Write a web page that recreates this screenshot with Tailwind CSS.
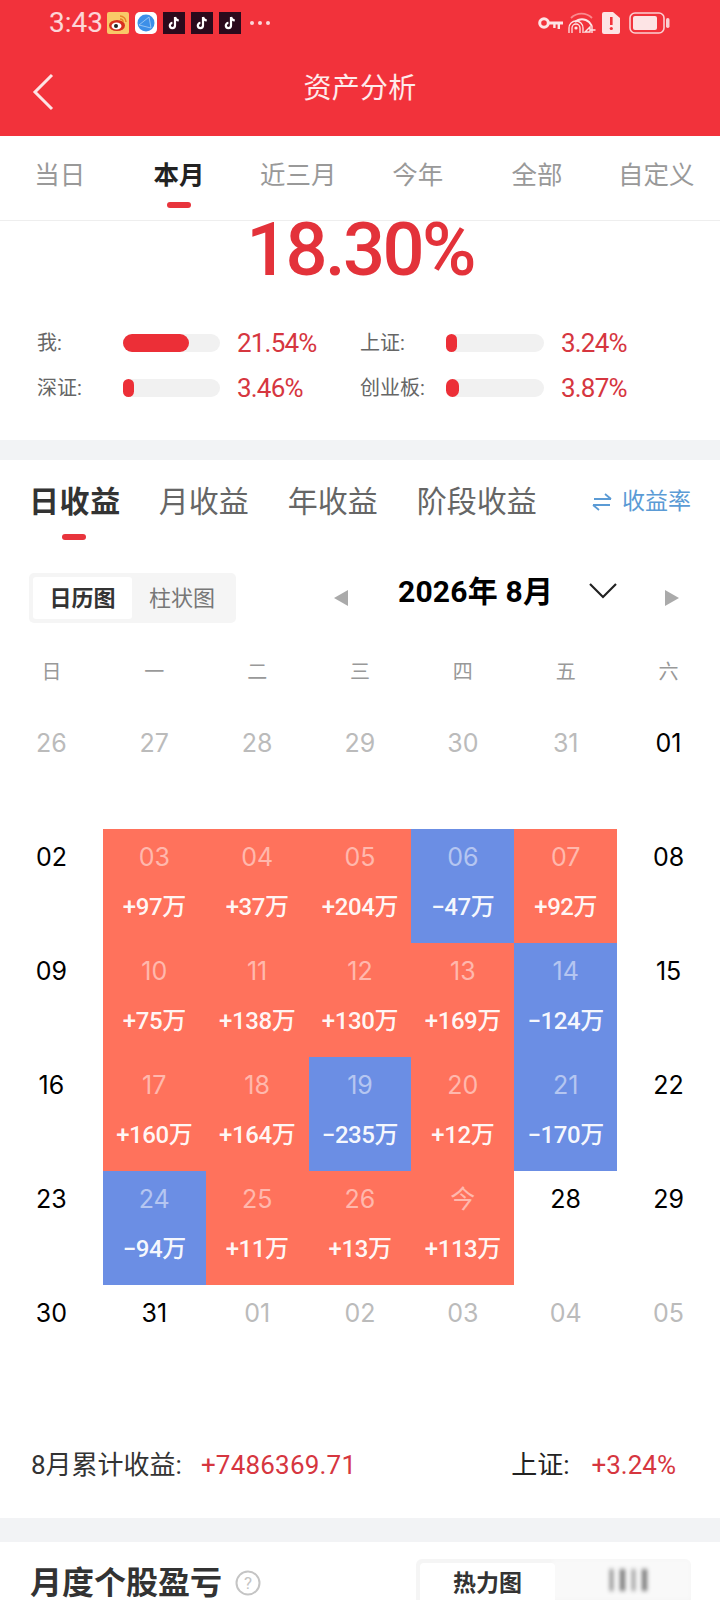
<!DOCTYPE html>
<html lang="zh">
<head>
  <meta charset="UTF-8" />
  <meta name="viewport" content="width=device-width, initial-scale=1.0"/>
  <title>资产分析</title>
  <script src="https://cdn.jsdelivr.net/npm/@tailwindcss/browser@4"></script>
</head>
<body class="bg-white font-['Roboto','Noto_Sans_CJK_SC',sans-serif]">
<div class="w-[720px] h-[1600px] overflow-hidden flex flex-col">

  <!-- header -->
  <div class="bg-[#f2323b] h-[136px] shrink-0 flex flex-col text-white">
    <div class="h-[46px] flex items-center pl-[49px] pr-[50px]">
      <span class="text-[28px] w-[58px] text-white/80 leading-none">3:43</span>
      <svg class="w-[22px] h-[22px] mr-[6px]" viewBox="0 0 22 22"><rect width="22" height="22" rx="2" fill="#f9c968"/><ellipse cx="10" cy="13.5" rx="8" ry="5.5" fill="#d8301f"/><ellipse cx="9.5" cy="14" rx="5" ry="3.5" fill="#fff"/><circle cx="9" cy="14" r="2" fill="#222"/><path d="M13 4a6 6 0 0 1 6 6M13 7a3 3 0 0 1 3 3" stroke="#e9842a" stroke-width="1.5" fill="none"/></svg>
      <svg class="w-[22px] h-[22px] mr-[6px]" viewBox="0 0 22 22"><rect width="22" height="22" rx="5" fill="#fff"/><circle cx="11" cy="11" r="8.5" fill="#3d8fe8"/><path d="M4 13l10-8M14 5l2 11M4 13l12 3" stroke="#a9d0f7" stroke-width="0.8" fill="none"/></svg>
      <svg class="w-[22px] h-[22px] mr-[6px]" viewBox="0 0 22 22"><rect width="22" height="22" fill="#2a0a1c"/><path d="M12 5v8.5a2.6 2.6 0 1 1-2.6-2.6M12 5c.4 2 1.7 3.3 3.8 3.5" stroke="#fff" stroke-width="2.2" fill="none"/></svg>
      <svg class="w-[22px] h-[22px] mr-[6px]" viewBox="0 0 22 22"><rect width="22" height="22" fill="#2a0a1c"/><path d="M12 5v8.5a2.6 2.6 0 1 1-2.6-2.6M12 5c.4 2 1.7 3.3 3.8 3.5" stroke="#fff" stroke-width="2.2" fill="none"/></svg>
      <svg class="w-[22px] h-[22px]" viewBox="0 0 22 22"><rect width="22" height="22" fill="#2a0a1c"/><path d="M12 5v8.5a2.6 2.6 0 1 1-2.6-2.6M12 5c.4 2 1.7 3.3 3.8 3.5" stroke="#fff" stroke-width="2.2" fill="none"/></svg>
      <div class="flex gap-[4px] ml-[9px]">
        <span class="w-[4px] h-[4px] rounded-full bg-white/80"></span>
        <span class="w-[4px] h-[4px] rounded-full bg-white/80"></span>
        <span class="w-[4px] h-[4px] rounded-full bg-white/80"></span>
      </div>
      <div class="ml-auto flex items-center">
        <svg class="w-[25px] h-[14px] mr-[5px]" viewBox="0 0 25 14"><circle cx="6" cy="7" r="4.3" fill="none" stroke="#fde4e5" stroke-width="3"/><path d="M10 5.4h15v3.2h-3V13h-2.4V8.6h-2V12h-2.4V8.6H10z" fill="#fde4e5"/></svg>
        <svg class="w-[28px] h-[22px] mr-[6px]" viewBox="0 0 28 22"><path d="M3 6a15 15 0 0 1 21 0" stroke="#f98a8e" stroke-width="1.8" fill="none"/><path d="M7 10a10 10 0 0 1 14 0l3 4" stroke="#fde4e5" stroke-width="2" fill="none"/><circle cx="8" cy="16" r="1.6" fill="#fde4e5"/><path d="M1 21v-5a7 7 0 0 1 14 0v5M4 21v-5a4 4 0 0 1 8 0v5" stroke="#fde4e5" stroke-width="1.3" fill="none"/><path d="M17 20l5-5v5zM24 14v7M22.500 18h5" stroke="#fde4e5" stroke-width="1.4" fill="none"/></svg>
        <svg class="w-[18px] h-[22px] mr-[9px]" viewBox="0 0 18 22"><path d="M2 0h9l7 6v14a2 2 0 0 1-2 2H2a2 2 0 0 1-2-2V2a2 2 0 0 1 2-2z" fill="#fde4e5"/><rect x="8" y="5" width="2.6" height="8" fill="#f2323b"/><circle cx="9.3" cy="16.5" r="1.6" fill="#f2323b"/></svg>
        <svg class="w-[41px] h-[22px]" viewBox="0 0 41 22"><rect x="1" y="1" width="34" height="20" rx="5" fill="none" stroke="#fbd0d2" stroke-width="1.6"/><rect x="4" y="4" width="24" height="14" rx="2" fill="#fde4e5"/><rect x="37" y="6" width="3.5" height="10" rx="1.7" fill="#fbd0d2"/></svg>
      </div>
    </div>
    <div class="relative flex-1 flex items-center justify-center pb-[4px]">
      <svg class="absolute left-[31px] top-[26px] w-[24px] h-[40px]" viewBox="0 0 24 40"><path d="M21 3L4 20l17 17" stroke="#fde4e5" stroke-width="3" fill="none"/></svg>
      <span class="text-[28px] text-white/90 tracking-[0.3px]">资产分析</span>
    </div>
  </div>

  <!-- range tabs -->
  <div class="relative h-[85px] shrink-0 grid grid-cols-6 items-center pr-[4px] pb-[5px] border-b border-[#eeeeee] text-[25.5px] leading-none text-[#999999] text-center">
    <span>当日</span>
    <span class="font-bold text-[#222222]">本月</span>
    <span>近三月</span>
    <span>今年</span>
    <span>全部</span>
    <span>自定义</span>
    <span class="absolute left-[167px] top-[66px] w-[24px] h-[6px] rounded-full bg-[#e8343c]"></span>
  </div>

  <!-- yield summary -->
  <div class="h-[219px] shrink-0 flex flex-col">
    <div class="h-[76px] flex justify-center items-start">
      <span class="text-[74px] leading-[57px] font-medium text-[#e3323a] tracking-[-2.6px]">18.30%</span>
    </div>
    <div class="grid grid-cols-[323px_1fr] gap-y-[27px] pl-[37px] mt-[37px] text-[26px] leading-[18px] text-[#666666]">
      <div class="flex items-center">
        <span class="w-[86px] text-[20px]">我:</span>
        <div class="w-[97px] h-[18px] rounded-full bg-[#f1f1f1]"><div class="h-full w-[66px] rounded-full bg-[#ec2f37]"></div></div>
        <span class="ml-[17px] text-[#d6363f] tracking-[-0.8px]">21.54%</span>
      </div>
      <div class="flex items-center">
        <span class="w-[86px] text-[20px]">上证:</span>
        <div class="w-[98px] h-[18px] rounded-full bg-[#f1f1f1]"><div class="h-full w-[11px] rounded-full bg-[#ec2f37]"></div></div>
        <span class="ml-[17px] text-[#d6363f] tracking-[-0.8px]">3.24%</span>
      </div>
      <div class="flex items-center">
        <span class="w-[86px] text-[20px]">深证:</span>
        <div class="w-[97px] h-[18px] rounded-full bg-[#f1f1f1]"><div class="h-full w-[11px] rounded-full bg-[#ec2f37]"></div></div>
        <span class="ml-[17px] text-[#d6363f] tracking-[-0.8px]">3.46%</span>
      </div>
      <div class="flex items-center">
        <span class="w-[86px] text-[20px]">创业板:</span>
        <div class="w-[98px] h-[18px] rounded-full bg-[#f1f1f1]"><div class="h-full w-[13px] rounded-full bg-[#ec2f37]"></div></div>
        <span class="ml-[17px] text-[#d6363f] tracking-[-0.8px]">3.87%</span>
      </div>
    </div>
  </div>

  <div class="h-[20px] shrink-0 bg-[#f2f3f5]"></div>

  <!-- profit tabs -->
  <div class="relative h-[113px] shrink-0 flex items-start pl-[29px] pt-[20px] text-[30px] leading-[44px] text-[#666666]">
    <span class="font-bold text-[#333333] tracking-[0.6px]">日收益</span>
    <span class="ml-[38px]">月收益</span>
    <span class="ml-[39px]">年收益</span>
    <span class="ml-[39px]">阶段收益</span>
    <div class="ml-auto mr-[29px] flex items-center text-[23px] text-[#5b9bd5]">
      <svg class="w-[20px] h-[18px] mr-[10px]" viewBox="0 0 20 18"><path d="M2 6h17M13 1l6 5M18 12H1M7 17l-6-5" stroke="#5b9bd5" stroke-width="1.8" fill="none"/></svg>
      <span>收益率</span>
    </div>
    <span class="absolute left-[62px] top-[74px] w-[24px] h-[6px] rounded-full bg-[#e8343c]"></span>
  </div>

  <!-- toggle + month picker -->
  <div class="h-[50px] shrink-0 flex items-center pl-[29px]">
    <div class="w-[207px] h-[50px] rounded-[5px] bg-[#f5f5f5] flex items-center p-[4px] text-[22px]">
      <span class="w-[99px] h-full rounded-[3px] bg-white font-bold text-[#333333] flex items-center justify-center">日历图</span>
      <span class="flex-1 text-center text-[#777777]">柱状图</span>
    </div>
    <svg class="w-[14px] h-[16px] ml-[98px]" viewBox="0 0 14 16"><path d="M14 0v16L0 8z" fill="#aaaaaa"/></svg>
    <span class="ml-[50px] w-[191px] text-[30px] font-bold text-black leading-none -mt-[12px] whitespace-nowrap tracking-[0.2px]">2026年 8月</span>
    <svg class="w-[28px] h-[16px] -mt-[14px]" viewBox="0 0 28 16"><path d="M1 1l13 13L27 1" stroke="#222222" stroke-width="2.2" fill="none"/></svg>
    <svg class="w-[14px] h-[16px] ml-[48px]" viewBox="0 0 14 16"><path d="M0 0v16l14-8z" fill="#aaaaaa"/></svg>
  </div>

  <!-- weekdays -->
  <div class="h-[92px] shrink-0 pt-[39px] grid grid-cols-7 items-start text-[20px] text-[#999999] text-center leading-none">
    <span>日</span><span>一</span><span>二</span><span>三</span><span>四</span><span>五</span><span>六</span>
  </div>

  <!-- calendar -->
  <div class="grid grid-cols-7 auto-rows-[114px] shrink-0 text-center text-[25px] leading-none font-['Inter','Noto_Sans_CJK_SC',sans-serif] font-normal text-black">
    <div class="pt-[16px] text-[#bbbbbb]">26</div>
    <div class="pt-[16px] text-[#bbbbbb]">27</div>
    <div class="pt-[16px] text-[#bbbbbb]">28</div>
    <div class="pt-[16px] text-[#bbbbbb]">29</div>
    <div class="pt-[16px] text-[#bbbbbb]">30</div>
    <div class="pt-[16px] text-[#bbbbbb]">31</div>
    <div class="pt-[16px]">01</div>

    <div class="pt-[16px]">02</div>
    <div class="pt-[16px] bg-[#ff725c] text-white/50">03<p class="mt-[25px] text-[24px] font-['Roboto','Noto_Sans_CJK_SC',sans-serif] font-medium text-white/95 tracking-[-0.4px]">+97万</p></div>
    <div class="pt-[16px] bg-[#ff725c] text-white/50">04<p class="mt-[25px] text-[24px] font-['Roboto','Noto_Sans_CJK_SC',sans-serif] font-medium text-white/95 tracking-[-0.4px]">+37万</p></div>
    <div class="pt-[16px] bg-[#ff725c] text-white/50">05<p class="mt-[25px] text-[24px] font-['Roboto','Noto_Sans_CJK_SC',sans-serif] font-medium text-white/95 tracking-[-0.4px]">+204万</p></div>
    <div class="pt-[16px] bg-[#6b8ee4] text-white/50">06<p class="mt-[25px] text-[24px] font-['Roboto','Noto_Sans_CJK_SC',sans-serif] font-medium text-white/95 tracking-[-0.4px]">−47万</p></div>
    <div class="pt-[16px] bg-[#ff725c] text-white/50">07<p class="mt-[25px] text-[24px] font-['Roboto','Noto_Sans_CJK_SC',sans-serif] font-medium text-white/95 tracking-[-0.4px]">+92万</p></div>
    <div class="pt-[16px]">08</div>

    <div class="pt-[16px]">09</div>
    <div class="pt-[16px] bg-[#ff725c] text-white/50">10<p class="mt-[25px] text-[24px] font-['Roboto','Noto_Sans_CJK_SC',sans-serif] font-medium text-white/95 tracking-[-0.4px]">+75万</p></div>
    <div class="pt-[16px] bg-[#ff725c] text-white/50">11<p class="mt-[25px] text-[24px] font-['Roboto','Noto_Sans_CJK_SC',sans-serif] font-medium text-white/95 tracking-[-0.4px]">+138万</p></div>
    <div class="pt-[16px] bg-[#ff725c] text-white/50">12<p class="mt-[25px] text-[24px] font-['Roboto','Noto_Sans_CJK_SC',sans-serif] font-medium text-white/95 tracking-[-0.4px]">+130万</p></div>
    <div class="pt-[16px] bg-[#ff725c] text-white/50">13<p class="mt-[25px] text-[24px] font-['Roboto','Noto_Sans_CJK_SC',sans-serif] font-medium text-white/95 tracking-[-0.4px]">+169万</p></div>
    <div class="pt-[16px] bg-[#6b8ee4] text-white/50">14<p class="mt-[25px] text-[24px] font-['Roboto','Noto_Sans_CJK_SC',sans-serif] font-medium text-white/95 tracking-[-0.4px]">−124万</p></div>
    <div class="pt-[16px]">15</div>

    <div class="pt-[16px]">16</div>
    <div class="pt-[16px] bg-[#ff725c] text-white/50">17<p class="mt-[25px] text-[24px] font-['Roboto','Noto_Sans_CJK_SC',sans-serif] font-medium text-white/95 tracking-[-0.4px]">+160万</p></div>
    <div class="pt-[16px] bg-[#ff725c] text-white/50">18<p class="mt-[25px] text-[24px] font-['Roboto','Noto_Sans_CJK_SC',sans-serif] font-medium text-white/95 tracking-[-0.4px]">+164万</p></div>
    <div class="pt-[16px] bg-[#6b8ee4] text-white/50">19<p class="mt-[25px] text-[24px] font-['Roboto','Noto_Sans_CJK_SC',sans-serif] font-medium text-white/95 tracking-[-0.4px]">−235万</p></div>
    <div class="pt-[16px] bg-[#ff725c] text-white/50">20<p class="mt-[25px] text-[24px] font-['Roboto','Noto_Sans_CJK_SC',sans-serif] font-medium text-white/95 tracking-[-0.4px]">+12万</p></div>
    <div class="pt-[16px] bg-[#6b8ee4] text-white/50">21<p class="mt-[25px] text-[24px] font-['Roboto','Noto_Sans_CJK_SC',sans-serif] font-medium text-white/95 tracking-[-0.4px]">−170万</p></div>
    <div class="pt-[16px]">22</div>

    <div class="pt-[16px]">23</div>
    <div class="pt-[16px] bg-[#6b8ee4] text-white/50">24<p class="mt-[25px] text-[24px] font-['Roboto','Noto_Sans_CJK_SC',sans-serif] font-medium text-white/95 tracking-[-0.4px]">−94万</p></div>
    <div class="pt-[16px] bg-[#ff725c] text-white/50">25<p class="mt-[25px] text-[24px] font-['Roboto','Noto_Sans_CJK_SC',sans-serif] font-medium text-white/95 tracking-[-0.4px]">+11万</p></div>
    <div class="pt-[16px] bg-[#ff725c] text-white/50">26<p class="mt-[25px] text-[24px] font-['Roboto','Noto_Sans_CJK_SC',sans-serif] font-medium text-white/95 tracking-[-0.4px]">+13万</p></div>
    <div class="pt-[16px] bg-[#ff725c] text-white/50">今<p class="mt-[25px] text-[24px] font-['Roboto','Noto_Sans_CJK_SC',sans-serif] font-medium text-white/95 tracking-[-0.4px]">+113万</p></div>
    <div class="pt-[16px]">28</div>
    <div class="pt-[16px]">29</div>

    <div class="pt-[16px]">30</div>
    <div class="pt-[16px]">31</div>
    <div class="pt-[16px] text-[#bbbbbb]">01</div>
    <div class="pt-[16px] text-[#bbbbbb]">02</div>
    <div class="pt-[16px] text-[#bbbbbb]">03</div>
    <div class="pt-[16px] text-[#bbbbbb]">04</div>
    <div class="pt-[16px] text-[#bbbbbb]">05</div>
  </div>

  <!-- month total -->
  <div class="h-[119px] shrink-0 flex items-center pl-[31px] pr-[44px] pt-[14px] text-[26px] text-[#333333]">
    <span>8月累计收益:</span>
    <span class="ml-[19px] text-[#d6363f] tracking-[0.2px]">+7486369.71</span>
    <span class="ml-auto text-[#222222]">上证:</span>
    <span class="ml-[22px] text-[#d6363f]">+3.24%</span>
  </div>

  <div class="h-[24px] shrink-0 bg-[#f2f3f5]"></div>

  <!-- monthly stock pnl, cut off by the bottom edge -->
  <div class="flex items-start pl-[30px] pt-[17px]">
    <span class="text-[32px] font-bold leading-[48px] text-[#333333]">月度个股盈亏</span>
    <svg class="w-[26px] h-[26px] ml-[13px] mt-[11px]" viewBox="0 0 26 26"><circle cx="13" cy="13" r="11.5" fill="none" stroke="#c4c4c4" stroke-width="2"/><text x="13" y="19" text-anchor="middle" font-size="17" fill="#c4c4c4">?</text></svg>
    <div class="relative ml-auto mr-[29px] w-[275px] h-[60px] rounded-[6px] bg-[#f5f5f5] p-[4px]">
      <div class="w-[135px] h-[52px] rounded-[4px] bg-white flex justify-center pt-[6px] text-[23px] leading-[30px] font-bold text-[#333333]">热力图</div>
      <div class="absolute left-[136px] top-0 w-[139px] h-[41px] flex justify-center gap-[7px] pt-[10px] pl-[14px] bg-white/40 blur-[2px]">
        <span class="w-[3px] h-[22px] bg-[#777777]"></span>
        <span class="w-[5px] h-[22px] bg-[#777777]"></span>
        <span class="w-[3px] h-[22px] bg-[#888888]"></span>
        <span class="w-[5px] h-[22px] bg-[#777777]"></span>
      </div>
    </div>
  </div>
</div>
</body>
</html>
